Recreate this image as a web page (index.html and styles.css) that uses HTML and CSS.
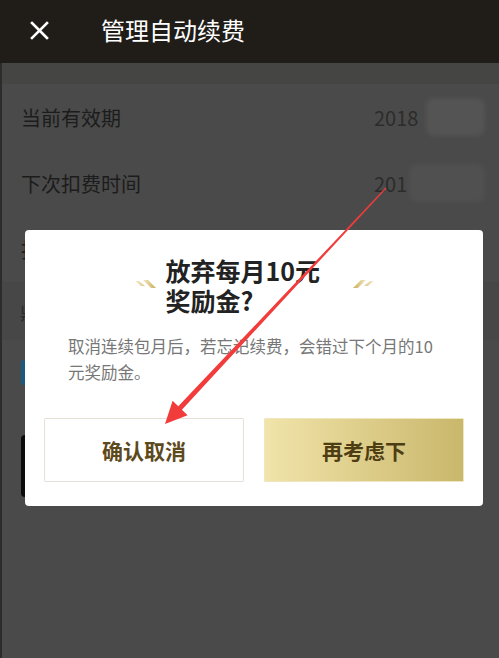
FILE: index.html
```html
<!DOCTYPE html>
<html lang="zh">
<head>
<meta charset="utf-8">
<title>管理自动续费</title>
<link rel="stylesheet" href="styles.css">
</head>
<body>
<div class="page">
  <header class="topbar">
    <svg class="close" width="19" height="19" viewBox="0 0 19 19"><path d="M2 2L17 17M17 2L2 17" stroke="#fff" stroke-width="2.6" stroke-linecap="square"/></svg>
    <h1 class="title">管理自动续费</h1>
  </header>
  <div class="band"></div>
  <div class="list">
    <div class="row"><span class="label">当前有效期</span><span class="value">2018<span class="blur b1"></span></span></div>
    <div class="row"><span class="label">下次扣费时间</span><span class="value">201<span class="blur b2"></span></span></div>
    <div class="row"><span class="label">扣费方式</span><span class="value"></span></div>
  </div>
  <div class="section"><span class="small">鼎</span></div>
  <div class="badge-row"><span class="badge"></span></div>
  <div class="black-btn"></div>

  <div class="modal">
    <div class="m-head">
      <svg class="deco" width="22" height="12" viewBox="0 0 22 12">
        <defs><linearGradient id="gl" x1="0" x2="1" y1="0" y2="0"><stop offset="0" stop-color="#f3e8c0"/><stop offset="1" stop-color="#c9ad5a"/></linearGradient></defs>
        <polygon points="0,3 4,3 10,8 6,8" fill="url(#gl)" opacity="0.7"/>
        <polygon points="8,2 13,2 21,10 16,10" fill="url(#gl)"/>
      </svg>
      <h2 class="m-title">放弃每月10元<br>奖励金?</h2>
      <svg class="deco" width="22" height="12" viewBox="0 0 22 12">
        <defs><linearGradient id="gr" x1="1" x2="0" y1="0" y2="0"><stop offset="0" stop-color="#f3e8c0"/><stop offset="1" stop-color="#c9ad5a"/></linearGradient></defs>
        <polygon points="22,3 18,3 12,8 16,8" fill="url(#gr)" opacity="0.7"/>
        <polygon points="14,2 9,2 1,10 6,10" fill="url(#gr)"/>
      </svg>
    </div>
    <p class="m-text">取消连续包月后，若忘记续费，会错过下个月的10元奖励金。</p>
    <div class="m-btns">
      <button class="btn btn-cancel">确认取消</button>
      <button class="btn btn-keep">再考虑下</button>
    </div>
  </div>

  <svg class="arrow" width="499" height="658" viewBox="0 0 499 658">
    <polygon points="386.4,188.4 181.9,409.7 187.6,415.2 165,424 172.6,400.8 178.3,406.3 385.6,187.6" fill="#f23b3b"/>
  </svg>
</div>
</body>
</html>
```
FILE: styles.css
```css
* { box-sizing: border-box; }
html, body { margin: 0; padding: 0; }
body {
  width: 499px;
  height: 658px;
  overflow: hidden;
  background: #4a4a4a;
  font-family: "Noto Sans CJK SC", "Noto Sans", sans-serif;
}
.page {
  position: relative;
  width: 499px;
  height: 658px;
  border-left: 2px solid #2c2c2c;
}
.topbar {
  height: 63px;
  margin-left: -2px;
  background: #201d19;
  display: flex;
  align-items: center;
  padding-left: 30px;
}
.close { display: block; margin-right: 52px; margin-top: -2px; }
.title {
  margin: 0;
  font-size: 24px;
  font-weight: 400;
  color: #fff;
  line-height: 1;
  margin-top: -3px;
}
.band { height: 21px; background: #454543; }
.list { padding: 0 14px 0 19px; }
.row {
  height: 66px;
  display: flex;
  align-items: center;
  justify-content: space-between;
}
.label { font-size: 20px; color: #1c1c1c; }
.value {
  display: flex;
  align-items: center;
  width: 111px;
  font-size: 20px;
  color: #2c2c2c;
}
.blur {
  display: block;
  height: 38px;
  background: #545454;
  border-radius: 8px;
  filter: blur(2px);
}
.b1 { width: 70px; margin-left: 8px; }
.b2 { width: 80px; margin-left: 2px; background: #505050; }
.section {
  height: 58px;
  background: #474747;
  border-top: 1px solid #464646;
  padding: 16px 0 0 18px;
}
.small { font-size: 18px; color: #2a2a2a; }
.badge-row { padding: 20px 0 0 19px; height: 86px; }
.badge {
  display: block;
  width: 40px;
  height: 25px;
  background: #1b5a80;
  border-radius: 3px;
}
.black-btn {
  margin: 9px 18px 0 19px;
  height: 62px;
  background: #0b0b0b;
  border-radius: 4px;
}
.modal {
  position: absolute;
  top: 230px;
  left: 23px;
  width: 458px;
  padding: 25px 19px 24px;
  background: #fff;
  border-radius: 4px;
}
.m-head {
  display: flex;
  align-items: center;
  justify-content: center;
  gap: 9px;
}
.deco { display: block; margin-top: -3px; }
.m-title {
  margin: 0;
  width: 177px;
  font-size: 25px;
  line-height: 30px;
  font-weight: 700;
  color: #222;
}
.m-text {
  margin: 18px 0 0;
  padding: 0 24px;
  font-size: 16.5px;
  line-height: 26px;
  color: #777;
}
.m-btns {
  margin-top: 33px;
  display: grid;
  grid-template-columns: 1fr 1fr;
  gap: 20px;
}
.btn {
  height: 64px;
  font-family: inherit;
  font-size: 21px;
  font-weight: 700;
  border-radius: 1px;
  cursor: pointer;
}
.btn-cancel {
  background: #fff;
  border: 1px solid #e6e0d6;
  color: #5d4a1c;
}
.btn-keep {
  border: 1px solid #efe6c0;
  background: linear-gradient(90deg, #f1e4aa, #c9b76b);
  color: #4e3d12;
}
.arrow {
  position: absolute;
  top: 0;
  left: -2px;
  pointer-events: none;
}
```
